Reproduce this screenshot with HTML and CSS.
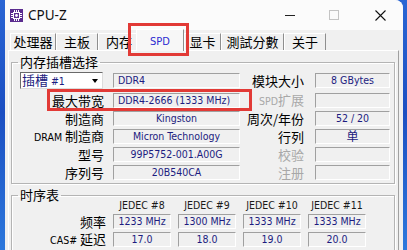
FILE: index.html
```html
<!DOCTYPE html>
<html lang="zh-CN">
<head>
<meta charset="utf-8">
<title>CPU-Z</title>
<link rel="stylesheet" href="styles.css">
</head>
<body>
<div class="window">
  <div class="titlebar">
    <svg class="app-icon" width="13" height="13" viewBox="0 0 13 13">
      <rect width="13" height="13" fill="#5b2c8f"/>
      <rect x="3.5" y="3.5" width="6" height="6" fill="none" stroke="#fff" stroke-width="1"/>
      <circle cx="6.5" cy="6.5" r="1.4" fill="#fff"/>
      <path d="M4.5 1v2M6.5 1v2M8.5 1v2M4.5 10v2M6.5 10v2M8.5 10v2M1 4.5h2M1 6.5h2M1 8.5h2M10 4.5h2M10 6.5h2M10 8.5h2" stroke="#fff" stroke-width="1"/>
    </svg>
    <span class="title">CPU-Z</span>
    <div class="controls">
      <div class="ctl"><span class="min-icon"></span></div>
      <div class="ctl"><span class="max-icon"></span></div>
      <div class="ctl">
        <svg width="11" height="11" viewBox="0 0 11 11"><path d="M0.5 0.5L10.5 10.5M10.5 0.5L0.5 10.5" stroke="#111" stroke-width="1.1"/></svg>
      </div>
    </div>
  </div>

  <div class="tabs">
    <div class="tab tab-cpu">处理器</div>
    <div class="tab tab-mb">主板</div>
    <div class="tab tab-mem">内存</div>
    <div class="tab tab-spd active">SPD</div>
    <div class="tab tab-gpu">显卡</div>
    <div class="tab tab-bench">測試分數</div>
    <div class="tab tab-about">关于</div>
  </div>

  <div class="panel">
    <fieldset class="group">
      <legend>内存插槽选择</legend>
      <div class="slot-grid">
        <div class="label-cell">
          <div class="combo"><span class="combo-text">插槽 <span class="lat">#1</span></span><span class="arrow"></span></div>
        </div>
        <div class="field left lat">DDR4</div>
        <div class="label label-r">模块大小</div>
        <div class="field lat">8 GBytes</div>

        <div class="label">最大带宽</div>
        <div class="field left lat">DDR4-2666 (1333 MHz)</div>
        <div class="label label-r dim"><span class="lat">SPD</span>扩展</div>
        <div class="field"></div>

        <div class="label">制造商</div>
        <div class="field lat">Kingston</div>
        <div class="label label-r">周次/年份</div>
        <div class="field lat">52 / 20</div>

        <div class="label"><span class="lat">DRAM</span> 制造商</div>
        <div class="field lat">Micron Technology</div>
        <div class="label label-r">行列</div>
        <div class="field cjk-val">单</div>

        <div class="label">型号</div>
        <div class="field lat">99P5752-001.A00G</div>
        <div class="label label-r dim">校验</div>
        <div class="field"></div>

        <div class="label">序列号</div>
        <div class="field lat">20B540CA</div>
        <div class="label label-r dim">注册</div>
        <div class="field"></div>
      </div>
    </fieldset>

    <fieldset class="group timing">
      <legend>时序表</legend>
      <div class="timing-grid">
        <div class="label"></div>
        <div class="head lat">JEDEC #8</div>
        <div class="head lat">JEDEC #9</div>
        <div class="head lat">JEDEC #10</div>
        <div class="head lat">JEDEC #11</div>

        <div class="label">频率</div>
        <div class="field lat">1233 MHz</div>
        <div class="field lat">1300 MHz</div>
        <div class="field lat">1333 MHz</div>
        <div class="field lat">1333 MHz</div>

        <div class="label"><span class="lat">CAS#</span> 延迟</div>
        <div class="field lat">17.0</div>
        <div class="field lat">18.0</div>
        <div class="field lat">19.0</div>
        <div class="field lat">20.0</div>

        <div class="label"></div>
        <div class="field"></div>
        <div class="field"></div>
        <div class="field"></div>
        <div class="field"></div>
      </div>
    </fieldset>
  </div>

  <div class="mark mark-tab"></div>
  <div class="mark mark-bw"></div>
</div>
</body>
</html>
```

FILE: styles.css
```css
* { box-sizing: border-box; }

html, body { margin: 0; }

body {
  width: 407px;
  height: 250px;
  overflow: hidden;
  background: linear-gradient(180deg, #2a66d4 0%, #1c4fc2 45%, #2d78dc 100%);
  font-family: "Noto Sans CJK SC", sans-serif;
  font-size: 13px;
  color: #000;
}

.window {
  position: relative;
  margin-left: 5px;
  width: 398px;
  height: 262px;
  background: #f0f0f0;
  border-radius: 0 8px 0 0;
  overflow: hidden;
}

/* title bar */
.titlebar {
  height: 30px;
  background: #fbfbfb;
  display: flex;
  align-items: center;
}

.app-icon { margin-left: 5px; display: block; }

.title {
  margin-left: 5px;
  font-family: "Noto Sans", "Liberation Sans", sans-serif;
  font-size: 13.5px;
  color: #111;
}

.controls { margin-left: auto; display: flex; }

.ctl {
  width: 46px;
  height: 30px;
  display: flex;
  align-items: center;
  justify-content: center;
}

.min-icon { display: block; width: 10px; height: 1px; background: #222; margin-left: 4px; }
.max-icon { display: block; width: 10px; height: 10px; border: 1px solid #c4c4c4; }

/* tabs */
.tabs {
  height: 20px;
  padding-left: 5px;
  display: flex;
  align-items: flex-end;
}

.tab {
  height: 17px;
  line-height: 16px;
  text-align: center;
  border-top: 1px solid #fff;
  border-left: 1px solid #fff;
  border-right: 1px solid #8e8e8e;
  background: #f0f0f0;
  white-space: nowrap;
}

.tab-cpu { width: 46px; }
.tab-mb { width: 42px; }
.tab-mem { width: 40px; text-indent: 2px; }
.tab-gpu { width: 37px; }
.tab-bench { width: 63px; }
.tab-about { width: 42px; }

.tab.active {
  position: relative;
  z-index: 1;
  width: 48px;
  height: 22px;
  margin: 0 0 -1px -2px;
  padding-top: 3px;
  line-height: 18px;
  background: #f7f7f7;
  color: #2b2bd0;
  font-family: "DejaVu Sans Condensed", "Liberation Sans", sans-serif;
  font-size: 11px;
}

/* tab panel */
.panel {
  margin: 0 4px 0 3px;
  padding: 5px 3px 0 2px;
  border-top: 1px solid #fff;
  border-left: 1px solid #fff;
  border-right: 1px solid #a0a0a0;
  height: 240px;
}

.group {
  margin: 0;
  padding: 2px 0 2px 0;
  min-inline-size: 0;
  border: 1px solid #b4b4b4;
  box-shadow: inset 1px 1px 0 #fff, 1px 1px 0 #fff;
}

.group legend {
  margin-left: 6px;
  padding: 0 2px;
  line-height: 12px;
  font-size: 13px;
}

.timing { margin-top: 5px; padding-top: 0; }

.lat {
  font-family: "DejaVu Sans Condensed", "Liberation Sans", sans-serif;
  font-size: 10.5px;
}

.slot-grid {
  display: grid;
  grid-template-columns: 101px 127px 75px 75px;
  grid-template-rows: 21px repeat(5, 17px);
  row-gap: 1px;
  align-items: center;
}

.label {
  text-align: right;
  padding-right: 9px;
  line-height: 15px;
  white-space: nowrap;
}

.label-r { padding-right: 11px; }

.dim { color: #a8a8a8; }

.field {
  height: 15px;
  line-height: 13px;
  text-align: center;
  color: #1c1c80;
  background: #f0f0f0;
  border: 1px solid;
  border-color: #a0a0a0 #fff #fff #a0a0a0;
  white-space: nowrap;
  overflow: hidden;
}

.field.left { text-align: left; padding-left: 4px; }

.cjk-val { font-size: 12px; line-height: 12px; overflow: visible; }

.label-cell { padding-left: 8px; }

.combo {
  width: 83px;
  height: 17px;
  background: #fff;
  border: 1px solid;
  border-color: #6a6a6a #dcdcdc #dcdcdc #6a6a6a;
  display: flex;
  align-items: center;
  color: #1c1c80;
}

.combo-text { padding-left: 1px; line-height: 15px; white-space: nowrap; }

.arrow {
  margin-left: auto;
  margin-right: 4px;
  width: 0;
  height: 0;
  border-left: 3.5px solid transparent;
  border-right: 3.5px solid transparent;
  border-top: 4px solid #000;
}

/* timings */
.timing-grid {
  display: grid;
  grid-template-columns: 94px repeat(4, 58px);
  grid-template-rows: 14px repeat(3, 17px);
  column-gap: 7px;
  row-gap: 1px;
  align-items: center;
  margin-top: -3px;
}

.timing-grid .label { padding-right: 0; }

.head {
  text-align: center;
  color: #1a1a1a;
  white-space: nowrap;
}

/* annotation marks */
.mark {
  position: absolute;
  border: 3px solid #e23a36;
  pointer-events: none;
  z-index: 5;
}

.mark-tab { left: 123px; top: 23px; width: 61px; height: 33px; }
.mark-bw { left: 42px; top: 89px; width: 205px; height: 22px; }
```
